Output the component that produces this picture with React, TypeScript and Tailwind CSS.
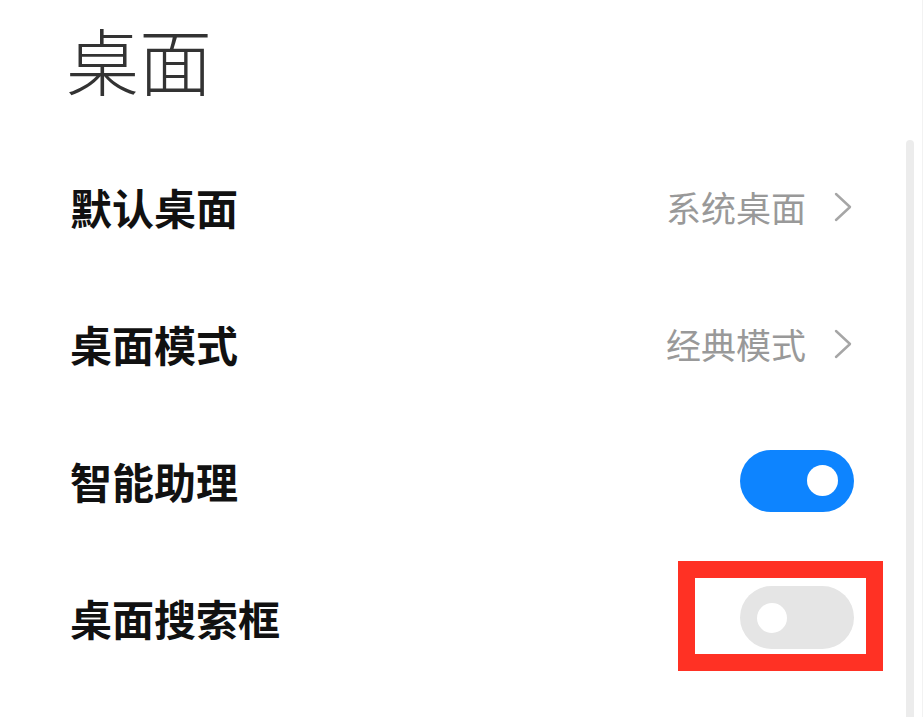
import React from "react";

const FONT = { fontFamily: '"Noto Sans CJK SC", "Noto Sans", sans-serif' };

function Chevron() {
  return (
    <svg width="18" height="30" viewBox="0 0 18 30" fill="none" className="shrink-0">
      <polyline points="2,2 16,15 2,28" stroke="#a6a6a6" strokeWidth="2.4" strokeLinecap="round" strokeLinejoin="round" />
    </svg>
  );
}

function Toggle({ on }: { on: boolean }) {
  return on ? (
    <div className="w-[114px] h-[62px] rounded-full bg-[#0d84ff] flex items-center justify-end pr-[16px]">
      <div className="w-[31px] h-[31px] rounded-full bg-white" />
    </div>
  ) : (
    <div className="w-[114px] h-[63px] rounded-full bg-[#e5e5e5] flex items-center justify-start pl-[17px]">
      <div className="w-[30px] h-[30px] rounded-full bg-white" />
    </div>
  );
}

function Row({ label, children }: { label: string; children: React.ReactNode }) {
  return (
    <div className="h-[137px] flex items-center justify-between pl-[70px] pr-[69px]">
      <span className="text-[42px] leading-none font-bold text-[#111]">{label}</span>
      {children}
    </div>
  );
}

export default function App() {
  return (
    <div className="relative w-[923px] h-[717px] bg-white overflow-hidden" style={FONT}>
      <div className="h-[138px] pl-[66px] pt-[22px]">
        <h1 className="text-[73px] leading-none font-light text-[#333]">桌面</h1>
      </div>
      <div className="flex flex-col">
        <Row label="默认桌面">
          <div className="flex items-center gap-[28px] mr-[2px]">
            <span className="text-[35px] leading-none text-[#999]">系统桌面</span>
            <Chevron />
          </div>
        </Row>
        <Row label="桌面模式">
          <div className="flex items-center gap-[28px] mr-[2px]">
            <span className="text-[35px] leading-none text-[#999]">经典模式</span>
            <Chevron />
          </div>
        </Row>
        <Row label="智能助理">
          <Toggle on />
        </Row>
        <Row label="桌面搜索框">
          <div className="relative">
            <Toggle on={false} />
            <div className="absolute -left-[62px] -right-[29px] -top-[25px] -bottom-[22px] border-[17px] border-[#ff3124]" />
          </div>
        </Row>
      </div>
      <div className="absolute left-[906px] top-[140px] bottom-0 w-[8px] rounded-t-full bg-[#ececec]" />
      <div className="absolute right-0 top-0 bottom-0 w-[1px] bg-[#f2f2f2]" />
    </div>
  );
}
